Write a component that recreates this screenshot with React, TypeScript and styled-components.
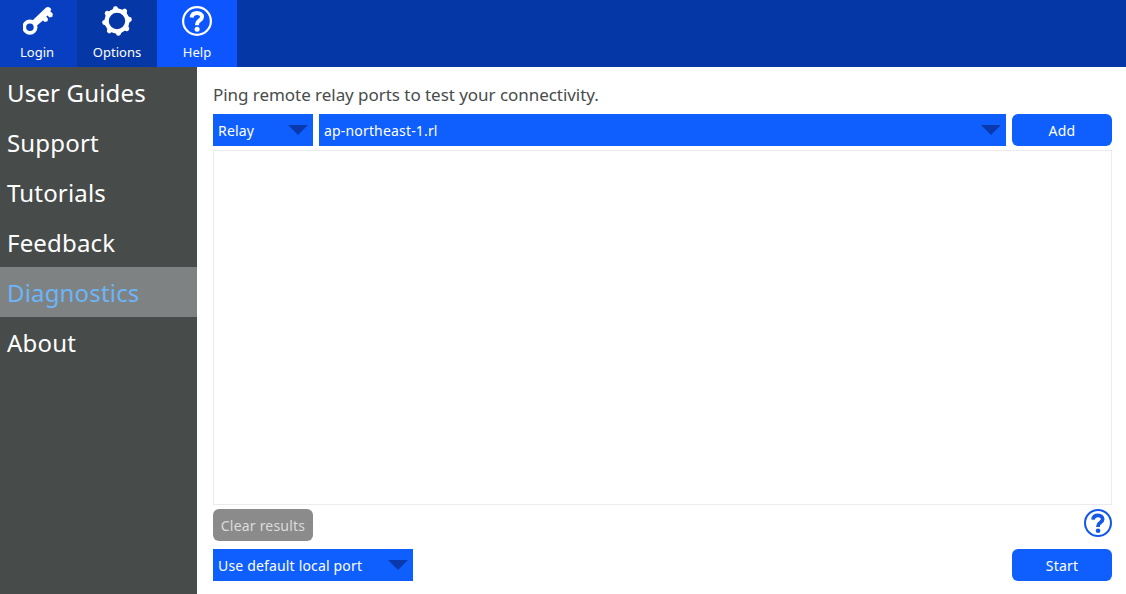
import React from "react";
import styled, { createGlobalStyle } from "styled-components";

const GlobalStyle = createGlobalStyle`
  * { box-sizing: border-box; }
  html, body, #root { margin: 0; height: 100%; }
  body { font-family: "Noto Sans", sans-serif; background: #fff; overflow: hidden; }
  button { font-family: inherit; }
`;

const Window = styled.div`
  display: flex;
  flex-direction: column;
  width: 1126px;
  height: 594px;
`;

const Toolbar = styled.header`
  display: flex;
  flex: 0 0 67px;
  background: #0637a7;
`;

const ToolbarButton = styled.button<{ $bg: string; $width: number }>`
  display: flex;
  flex-direction: column;
  align-items: center;
  width: ${(p) => p.$width}px;
  padding: 5px 0 0;
  border: 0;
  background: ${(p) => p.$bg};
  color: #fff;
  font-size: 13px;
  line-height: 18px;
  svg { display: block; margin-bottom: 6px; }
`;

const ToolbarLabel = styled.span<{ $shift?: number }>`
  padding-right: ${(p) => p.$shift ?? 0}px;
`;

const Body = styled.div`
  display: flex;
  flex: 1;
  min-height: 0;
`;

const Sidebar = styled.nav`
  flex: 0 0 197px;
  background: #474c4b;
`;

const SidebarItem = styled.div<{ $active?: boolean }>`
  height: 50px;
  padding-left: 7px;
  font-size: 24px;
  letter-spacing: 0.17px;
  line-height: 51px;
  color: ${(p) => (p.$active ? "#6bb5f8" : "#fff")};
  background: ${(p) => (p.$active ? "#7f8282" : "transparent")};
`;

const Content = styled.main`
  display: flex;
  flex: 1;
  flex-direction: column;
  padding: 14px 14px 13px 16px;
`;

const Description = styled.p`
  margin: 0;
  height: 33px;
  font-size: 17px;
  letter-spacing: -0.045px;
  line-height: 28px;
  color: #474c4b;
`;

const Row = styled.div`
  display: flex;
  gap: 6px;
`;

const SpreadRow = styled(Row)`
  justify-content: space-between;
  height: 32px;
`;

const Select = styled.div<{ $width?: number }>`
  display: flex;
  flex: ${(p) => (p.$width ? `0 0 ${p.$width}px` : "1")};
  align-items: center;
  justify-content: space-between;
  height: 32px;
  padding: 0 5px;
  background: #0f5fff;
  color: #fff;
  font-size: 14px;
  letter-spacing: 0.17px;
  line-height: 33px;
`;

const Button = styled.button<{ $muted?: boolean }>`
  flex: 0 0 100px;
  height: 32px;
  padding: 0;
  border: 0;
  border-radius: 6px;
  background: ${(p) => (p.$muted ? "#8b8b8b" : "#0f5fff")};
  color: ${(p) => (p.$muted ? "#dcdcdc" : "#fff")};
  font-size: 14px;
  letter-spacing: 0.2px;
  line-height: 33px;
`;

const Results = styled.section`
  flex: 1;
  margin: 4px 0;
  border: 1px solid #ececee;
`;

const Footer = styled.footer`
  display: flex;
  flex-direction: column;
  gap: 8px;
`;

const Arrow = () => (
  <svg width="20" height="10" viewBox="0 0 20 10">
    <path d="M0 0H20L10 10Z" fill="#0a39ad" />
  </svg>
);

const KeyIcon = () => (
  <svg width="32" height="32" viewBox="0 0 32 32" fill="none">
    <circle cx="6.9" cy="22.2" r="5.7" stroke="#fff" strokeWidth="3.8" />
    <path d="M9.2 15.8 22.8 2.8C24 1.6 25.9 1.6 27 2.8L28.3 4.2 27.3 6.2 29.8 8.8 29.4 11.8 26.6 12.4 24.4 10.6 23.3 11.7 25 13.8 24.5 16.3 21.8 16.9 19.9 15.4 13.4 21Z" fill="#fff" />
  </svg>
);

const GearIcon = () => (
  <svg width="32" height="32" viewBox="0 0 32 32" fill="none">
    <circle cx="16" cy="16" r="10.3" stroke="#fff" strokeWidth="4.2" />
    {Array.from({ length: 8 }, (_, i) => (
      <path
        key={i}
        d="M11.6 5.1Q13.6 4.2 13.7 2.8Q14 1.1 16 1.1Q18 1.1 18.3 2.8Q18.4 4.2 20.4 5.1Z"
        transform={`rotate(${i * 45 - 7} 16 16)`}
        fill="#fff"
      />
    ))}
  </svg>
);

const HelpIcon = ({ size, color, inset }: { size: number; color: string; inset: number }) => (
  <svg
    width={size}
    height={size}
    viewBox={`${inset} ${inset} ${32 - inset * 2} ${32 - inset * 2}`}
    fill="none"
    stroke={color}
  >
    <circle cx="16" cy="16" r="13.9" strokeWidth="2.2" />
    <path d="M10.6 12.4C11 9.2 13.3 7.9 16 7.9C19 7.9 21 9.6 21 12.1C21 15.4 16.1 15.6 16.1 19V20.3" strokeWidth="4" />
    <circle cx="16.1" cy="24.3" r="2.5" fill={color} stroke="none" />
  </svg>
);

const sections = ["User Guides", "Support", "Tutorials", "Feedback", "Diagnostics", "About"];

export default function App() {
  return (
    <>
      <GlobalStyle />
      <Window>
        <Toolbar>
          <ToolbarButton $bg="#083fc0" $width={77}>
            <KeyIcon />
            <ToolbarLabel $shift={3}>Login</ToolbarLabel>
          </ToolbarButton>
          <ToolbarButton $bg="#0637a7" $width={80}>
            <GearIcon />
            <ToolbarLabel>Options</ToolbarLabel>
          </ToolbarButton>
          <ToolbarButton $bg="#0d56ff" $width={80}>
            <HelpIcon size={32} color="#fff" inset={0} />
            <ToolbarLabel>Help</ToolbarLabel>
          </ToolbarButton>
        </Toolbar>
        <Body>
          <Sidebar>
            {sections.map((name) => (
              <SidebarItem key={name} $active={name === "Diagnostics"}>{name}</SidebarItem>
            ))}
          </Sidebar>
          <Content>
            <Description>Ping remote relay ports to test your connectivity.</Description>
            <Row>
              <Select $width={100}>Relay<Arrow /></Select>
              <Select>ap-northeast-1.rl<Arrow /></Select>
              <Button>Add</Button>
            </Row>
            <Results />
            <Footer>
              <SpreadRow>
                <Button $muted>Clear results</Button>
                <HelpIcon size={28} color="#1558e8" inset={1} />
              </SpreadRow>
              <SpreadRow>
                <Select $width={200}>Use default local port<Arrow /></Select>
                <Button>Start</Button>
              </SpreadRow>
            </Footer>
          </Content>
        </Body>
      </Window>
    </>
  );
}
